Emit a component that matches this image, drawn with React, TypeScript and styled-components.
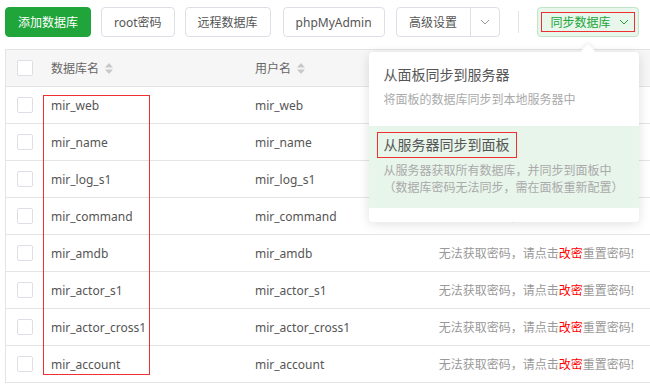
import React from 'react';
import styled, { createGlobalStyle } from 'styled-components';

const GlobalStyle = createGlobalStyle`
    body {
        margin: 0;
        background: #fff;
        font-family: "Noto Sans", "Noto Sans CJK SC", sans-serif;
        overflow: hidden;
    }
`;

const Page = styled.div`
    padding: 7px 0 0 5px;
    width: 645px;
    height: 385px;
    overflow: hidden;
`;

const Toolbar = styled.div`
    display: flex;
    align-items: center;
    height: 30px;
`;

const Btn = styled.button<{ $primary?: boolean; $gap?: number }>`
    height: 30px;
    padding: 0 12px;
    margin-right: ${p => p.$gap ?? 10}px;
    border: 1px solid ${p => p.$primary ? '#20a53a' : '#dcdfe6'};
    background: ${p => p.$primary ? '#20a53a' : '#fff'};
    color: ${p => p.$primary ? '#fff' : '#555'};
    border-radius: 4px;
    font-family: inherit;
    font-size: 12px;
    display: flex;
    align-items: center;
    white-space: nowrap;
    cursor: pointer;
`;

const BtnGroup = styled.div`
    display: flex;
    height: 30px;
    border: 1px solid #dcdfe6;
    border-radius: 4px;
    box-sizing: border-box;
    margin-left: 1px;
`;

const GroupMain = styled.span`
    width: 73px;
    display: flex;
    align-items: center;
    justify-content: center;
    font-size: 12px;
    color: #555;
    border-right: 1px solid #dcdfe6;
`;

const GroupArrow = styled.span`
    width: 28px;
    display: flex;
    align-items: center;
    justify-content: center;
`;

const Divider = styled.span`
    width: 1px;
    height: 22px;
    background: #e4e4e4;
    margin: 0 18px;
`;

const SyncWrap = styled.div`
    position: relative;
`;

const SyncBtn = styled.button`
    height: 30px;
    width: 102px;
    padding: 0 3px;
    border: 1px solid #bfe4c6;
    background: #e9f6eb;
    border-radius: 4px;
    display: flex;
    align-items: center;
    cursor: pointer;
    margin-top: -1px;
`;

const Marked = styled.span`
    display: flex;
    align-items: center;
    gap: 8px;
    width: 94px;
    height: 20px;
    box-sizing: border-box;
    padding: 0 0 0 9px;
    border: 1px solid #f03030;
    color: #20a53a;
    white-space: nowrap;
    font-family: "Noto Sans", "Noto Sans CJK SC", sans-serif;
    font-size: 12px;
`;

const Menu = styled.div`
    position: absolute;
    right: 0;
    top: 44px;
    width: 270px;
    background: #fff;
    border-radius: 4px;
    box-shadow: 0 2px 12px rgba(0, 0, 0, 0.12);
    padding: 11px 0 14px;
    z-index: 10;

    &::before {
        content: "";
        position: absolute;
        top: -6px;
        right: 46px;
        width: 10px;
        height: 10px;
        background: #fff;
        transform: rotate(45deg);
        box-shadow: -2px -2px 4px rgba(0, 0, 0, 0.05);
    }
`;

const MenuItem = styled.div<{ $active?: boolean }>`
    background: ${p => p.$active ? '#e8f5ea' : 'transparent'};
    padding: ${p => p.$active ? '6px 15px 12px' : '0 15px 18px'};
    position: relative;
`;

const ItemTitle = styled.div<{ $boxed?: boolean }>`
    font-size: 14px;
    color: #555;
    line-height: 24px;
    margin: ${p => p.$boxed ? '0 0 0 -7px' : '0'};
    padding: ${p => p.$boxed ? '0 6px' : '0'};
    border: ${p => p.$boxed ? '1px solid #f03030' : 'none'};
    display: inline-block;
`;

const ItemDesc = styled.div`
    font-size: 12px;
    color: #aaa;
    line-height: 17px;
    margin-top: 4px;
`;

const Table = styled.div`
    margin-top: 12px;
    border: 1px solid #e4e4e4;
    border-right: none;
`;

const Row = styled.div<{ $head?: boolean }>`
    display: grid;
    grid-template-columns: 37px 204px 190px 1fr;
    align-items: center;
    height: ${p => p.$head ? '36px' : '37px'};
    background: ${p => p.$head ? '#f6f6f6' : '#fff'};
    border-top: ${p => p.$head ? 'none' : '1px solid #e4e4e4'};
    box-sizing: border-box;
    font-size: 12px;
    color: ${p => p.$head ? '#666' : '#555'};
`;

const Body = styled.div`
    position: relative;
`;

const Check = styled.span`
    width: 14px;
    height: 14px;
    margin-left: 11px;
    border: 1px solid #dcdfe6;
    border-radius: 2px;
    background: #fff;
`;

const Cell = styled.span<{ $right?: boolean }>`
    padding: ${p => p.$right ? '0 16px 0 0' : '0 0 0 8px'};
    display: flex;
    align-items: center;
    justify-content: ${p => p.$right ? 'flex-end' : 'flex-start'};
    gap: 6px;
    white-space: nowrap;
`;

const Hint = styled.span`
    color: #999;
`;

const Red = styled.span`
    color: #ff0000;
`;

const NameBox = styled.div`
    position: absolute;
    left: 37px;
    top: 9px;
    bottom: 7px;
    width: 105px;
    border: 1px solid #f03030;
    pointer-events: none;
`;

const Chevron = ({ color }: { color: string }) => (
    <svg width="10" height="6" viewBox="0 0 10 6" fill="none">
        <path d="M1 1l4 4 4-4" stroke={color} strokeWidth="1" />
    </svg>
);

const SortIcon = () => (
    <svg width="8" height="11" viewBox="0 0 8 11">
        <path d="M4 0L8 4.5H0z" fill="#c8c8c8" />
        <path d="M4 11L0 6.5H8z" fill="#c8c8c8" />
    </svg>
);

const databases = [
    'mir_web',
    'mir_name',
    'mir_log_s1',
    'mir_command',
    'mir_amdb',
    'mir_actor_s1',
    'mir_actor_cross1',
    'mir_account',
];

export default function App() {
    return (
        <Page>
            <GlobalStyle />
            <Toolbar>
                <Btn $primary>添加数据库</Btn>
                <Btn>root密码</Btn>
                <Btn $gap={12}>远程数据库</Btn>
                <Btn>phpMyAdmin</Btn>
                <BtnGroup>
                    <GroupMain>高级设置</GroupMain>
                    <GroupArrow><Chevron color="#999" /></GroupArrow>
                </BtnGroup>
                <Divider />
                <SyncWrap>
                    <SyncBtn>
                        <Marked>同步数据库 <Chevron color="#20a53a" /></Marked>
                    </SyncBtn>
                    <Menu>
                        <MenuItem>
                            <ItemTitle>从面板同步到服务器</ItemTitle>
                            <ItemDesc>将面板的数据库同步到本地服务器中</ItemDesc>
                        </MenuItem>
                        <MenuItem $active>
                            <ItemTitle $boxed>从服务器同步到面板</ItemTitle>
                            <ItemDesc>
                                从服务器获取所有数据库，并同步到面板中
                                <br />
                                （数据库密码无法同步，需在面板重新配置）
                            </ItemDesc>
                        </MenuItem>
                    </Menu>
                </SyncWrap>
            </Toolbar>

            <Table>
                <Row $head>
                    <Check />
                    <Cell>数据库名 <SortIcon /></Cell>
                    <Cell>用户名 <SortIcon /></Cell>
                    <Cell $right />
                </Row>
                <Body>
                    {databases.map(db => (
                        <Row key={db}>
                            <Check />
                            <Cell>{db}</Cell>
                            <Cell>{db}</Cell>
                            <Cell $right>
                                <Hint>无法获取密码，请点击<Red>改密</Red>重置密码!</Hint>
                            </Cell>
                        </Row>
                    ))}
                    <NameBox />
                </Body>
            </Table>
        </Page>
    );
}
